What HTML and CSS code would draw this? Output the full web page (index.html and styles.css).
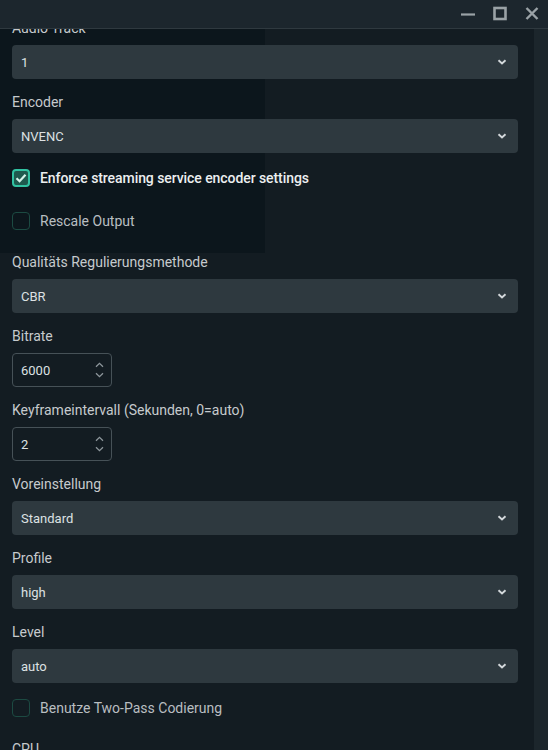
FILE: index.html
```html
<!DOCTYPE html>
<html>
<head>
<meta charset="utf-8">
<link rel="stylesheet" href="styles.css">
</head>
<body>
<div class="window">
  <div class="titlebar">
    <div class="win-btn">
      <svg width="16" height="16" viewBox="0 0 16 16"><path d="M1 8.5h14" stroke="#9aa2a6" stroke-width="2.2" fill="none"/></svg>
    </div>
    <div class="win-btn">
      <svg width="16" height="16" viewBox="0 0 16 16"><rect x="2.5" y="2" width="11" height="11" stroke="#9aa2a6" stroke-width="2.6" fill="none"/></svg>
    </div>
    <div class="win-btn">
      <svg width="16" height="16" viewBox="0 0 16 16"><path d="M2.5 2L13.5 13M13.5 2L2.5 13" stroke="#9aa2a6" stroke-width="2.4" fill="none"/></svg>
    </div>
  </div>
  <div class="main">
    <div class="shade"></div>
    <div class="content">
      <div class="scroll">
        <div class="field">
          <div class="label">Audio Track</div>
          <div class="select"><span>1</span><svg class="chev" width="10" height="6" viewBox="0 0 10 6"><path d="M1.5 1.2L5 4.4 8.5 1.2" stroke="#d3d8db" stroke-width="1.9" fill="none"/></svg></div>
        </div>
        <div class="field">
          <div class="label">Encoder</div>
          <div class="select"><span>NVENC</span><svg class="chev" width="10" height="6" viewBox="0 0 10 6"><path d="M1.5 1.2L5 4.4 8.5 1.2" stroke="#d3d8db" stroke-width="1.9" fill="none"/></svg></div>
        </div>
        <div class="check-row">
          <div class="box checked">
            <svg width="14" height="14" viewBox="0 0 14 14"><path d="M2.5 7.2L5.6 10.2 11.5 3.8" stroke="#d4f3ea" stroke-width="2.2" fill="none"/></svg>
          </div>
          <span class="check-label strong">Enforce streaming service encoder settings</span>
        </div>
        <div class="check-row">
          <div class="box"></div>
          <span class="check-label">Rescale Output</span>
        </div>
        <div class="field">
          <div class="label">Qualitäts Regulierungsmethode</div>
          <div class="select"><span>CBR</span><svg class="chev" width="10" height="6" viewBox="0 0 10 6"><path d="M1.5 1.2L5 4.4 8.5 1.2" stroke="#d3d8db" stroke-width="1.9" fill="none"/></svg></div>
        </div>
        <div class="field">
          <div class="label">Bitrate</div>
          <div class="number"><span>6000</span>
            <div class="spin">
              <svg width="9" height="6" viewBox="0 0 9 6"><path d="M1 4.8L4.5 1.4 8 4.8" stroke="#8e979c" stroke-width="1.3" fill="none"/></svg>
              <svg width="9" height="6" viewBox="0 0 9 6"><path d="M1 1.2L4.5 4.6 8 1.2" stroke="#8e979c" stroke-width="1.3" fill="none"/></svg>
            </div>
          </div>
        </div>
        <div class="field">
          <div class="label">Keyframeintervall (Sekunden, 0=auto)</div>
          <div class="number"><span>2</span>
            <div class="spin">
              <svg width="9" height="6" viewBox="0 0 9 6"><path d="M1 4.8L4.5 1.4 8 4.8" stroke="#8e979c" stroke-width="1.3" fill="none"/></svg>
              <svg width="9" height="6" viewBox="0 0 9 6"><path d="M1 1.2L4.5 4.6 8 1.2" stroke="#8e979c" stroke-width="1.3" fill="none"/></svg>
            </div>
          </div>
        </div>
        <div class="field">
          <div class="label">Voreinstellung</div>
          <div class="select"><span>Standard</span><svg class="chev" width="10" height="6" viewBox="0 0 10 6"><path d="M1.5 1.2L5 4.4 8.5 1.2" stroke="#d3d8db" stroke-width="1.9" fill="none"/></svg></div>
        </div>
        <div class="field">
          <div class="label">Profile</div>
          <div class="select"><span>high</span><svg class="chev" width="10" height="6" viewBox="0 0 10 6"><path d="M1.5 1.2L5 4.4 8.5 1.2" stroke="#d3d8db" stroke-width="1.9" fill="none"/></svg></div>
        </div>
        <div class="field">
          <div class="label">Level</div>
          <div class="select"><span>auto</span><svg class="chev" width="10" height="6" viewBox="0 0 10 6"><path d="M1.5 1.2L5 4.4 8.5 1.2" stroke="#d3d8db" stroke-width="1.9" fill="none"/></svg></div>
        </div>
        <div class="check-row">
          <div class="box"></div>
          <span class="check-label">Benutze Two-Pass Codierung</span>
        </div>
        <div class="field">
          <div class="label">CPU</div>
        </div>
      </div>
    </div>
    <div class="scrollbar"></div>
  </div>
</div>
</body>
</html>
```
FILE: styles.css
```css
* { box-sizing: border-box; }
html, body {
  margin: 0;
  padding: 0;
  background: #131c22;
  font-family: Roboto, "Liberation Sans", sans-serif;
}
.window {
  width: 548px;
  height: 750px;
  overflow: hidden;
  display: flex;
  flex-direction: column;
}
.titlebar {
  height: 29px;
  flex: none;
  background: #1c262d;
  border-bottom: 1px solid #2f393f;
  display: flex;
  justify-content: flex-end;
  align-items: center;
  gap: 16px;
  padding-right: 8px;
}
.win-btn {
  width: 16px;
  height: 16px;
  display: flex;
}
.main {
  flex: 1;
  display: flex;
  position: relative;
  min-height: 0;
}
.shade {
  position: absolute;
  left: 0;
  top: 0;
  width: 265px;
  height: 224px;
  background: #0c161c;
  z-index: 0;
}
.content {
  flex: 1;
  overflow: hidden;
  position: relative;
  z-index: 1;
  padding: 0 16px 0 12px;
}
.scroll {
  margin-top: -10px;
  display: flex;
  flex-direction: column;
}
.scrollbar {
  width: 14px;
  flex: none;
  background: #1c262c;
}
.field {
  display: flex;
  flex-direction: column;
  margin-bottom: 14px;
}
.label {
  font-size: 14px;
  line-height: 18px;
  color: #c6cacd;
  margin-bottom: 8px;
}
.select {
  height: 34px;
  background: #2e393f;
  border-radius: 4px;
  display: flex;
  align-items: center;
  justify-content: space-between;
  padding: 0 11px 0 9px;
  font-size: 13px;
  color: #dde1e3;
}
.chev { display: block; }
.number {
  width: 100px;
  height: 34px;
  border: 1px solid #465157;
  border-radius: 4px;
  display: flex;
  align-items: center;
  justify-content: space-between;
  padding: 0 7px 0 8px;
  font-size: 13px;
  color: #dde1e3;
}
.spin {
  display: flex;
  flex-direction: column;
  gap: 4px;
}
.spin svg { display: block; }
.check-row {
  height: 22px;
  display: flex;
  align-items: center;
  gap: 10px;
  margin-bottom: 21px;
}
.box {
  width: 18px;
  height: 18px;
  border: 1px solid #1c4a42;
  border-radius: 4px;
  display: flex;
  align-items: center;
  justify-content: center;
}
.box.checked {
  border: 2px solid #31c3a2;
  background: #1f5a4e;
}
.check-label {
  font-size: 14px;
  color: #b9bec1;
}
.check-label.strong {
  color: #eceff0;
  font-weight: 500;
  letter-spacing: -0.07px;
}
```
